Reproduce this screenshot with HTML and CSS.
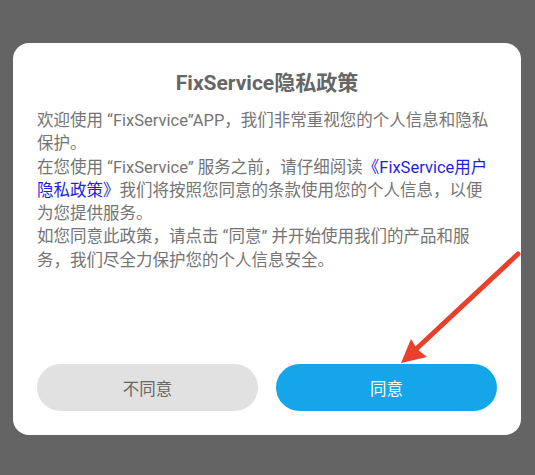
FILE: index.html
```html
<!DOCTYPE html>
<html lang="zh-CN">
<head>
    <meta charset="UTF-8">
    <meta name="viewport" content="width=device-width, initial-scale=1.0">
    <title>FixService - 隐私政策</title>
    <link rel="stylesheet" href="styles.css">
</head>
<body>
    <div class="dialog">
        <h2 class="dialog-title">FixService隐私政策</h2>

        <div class="dialog-body">
            <p>欢迎使用 “FixService”APP，我们非常重视您的个人信息和隐私保护。</p>
            <p>在您使用 “FixService” 服务之前，请仔细阅读<a href="#" class="policy-link">《FixService用户隐私政策》</a>我们将按照您同意的条款使用您的个人信息，以便为您提供服务。</p>
            <p>如您同意此政策，请点击 “同意” 并开始使用我们的产品和服务，我们尽全力保护您的个人信息安全。</p>
        </div>

        <div class="dialog-actions">
            <button class="button button-cancel">不同意</button>
            <button class="button button-ok">同意</button>
        </div>

        <svg class="hint-arrow" width="508" height="392" viewBox="0 0 508 392">
            <line x1="505" y1="211" x2="400" y2="309" stroke="#e8402a" stroke-width="5" stroke-linecap="round"/>
            <polygon points="388,320 398,296 404,306 414,314" fill="#e8402a"/>
        </svg>
    </div>
</body>
</html>
```

FILE: styles.css
```css
body {
    margin: 0;
    min-height: 475px;
    background-color: #646464;
    font-family: 'Roboto', 'Noto Sans CJK SC', sans-serif;
    padding: 43px 14px 40px 13px;
    box-sizing: border-box;
}

.dialog {
    position: relative;
    width: 508px;
    height: 392px;
    box-sizing: border-box;
    background-color: #ffffff;
    border-radius: 16px;
    padding: 26px 24px 24px 24px;
    display: flex;
    flex-direction: column;
}

.dialog-title {
    margin: 0 0 12px;
    font-size: 21px;
    line-height: 28px;
    font-weight: bold;
    color: #666666;
    text-align: center;
}

.dialog-body {
    flex: 1;
    font-size: 16.5px;
    line-height: 23.3px;
    color: #747474;
}

.dialog-body p {
    margin: 0;
}

.policy-link {
    color: #1f1fd8;
    text-decoration: none;
}

.dialog-actions {
    display: flex;
    gap: 18px;
}

.button {
    flex: 1;
    height: 47px;
    border: none;
    border-radius: 24px;
    font-size: 16.5px;
    font-family: 'Roboto', 'Noto Sans CJK SC', sans-serif;
    cursor: pointer;
}

.button-cancel {
    background-color: #e1e1e1;
    color: #666666;
}

.button-ok {
    background-color: #14a6e9;
    color: #ffffff;
}

.hint-arrow {
    position: absolute;
    left: 0;
    top: 0;
    pointer-events: none;
}
```
